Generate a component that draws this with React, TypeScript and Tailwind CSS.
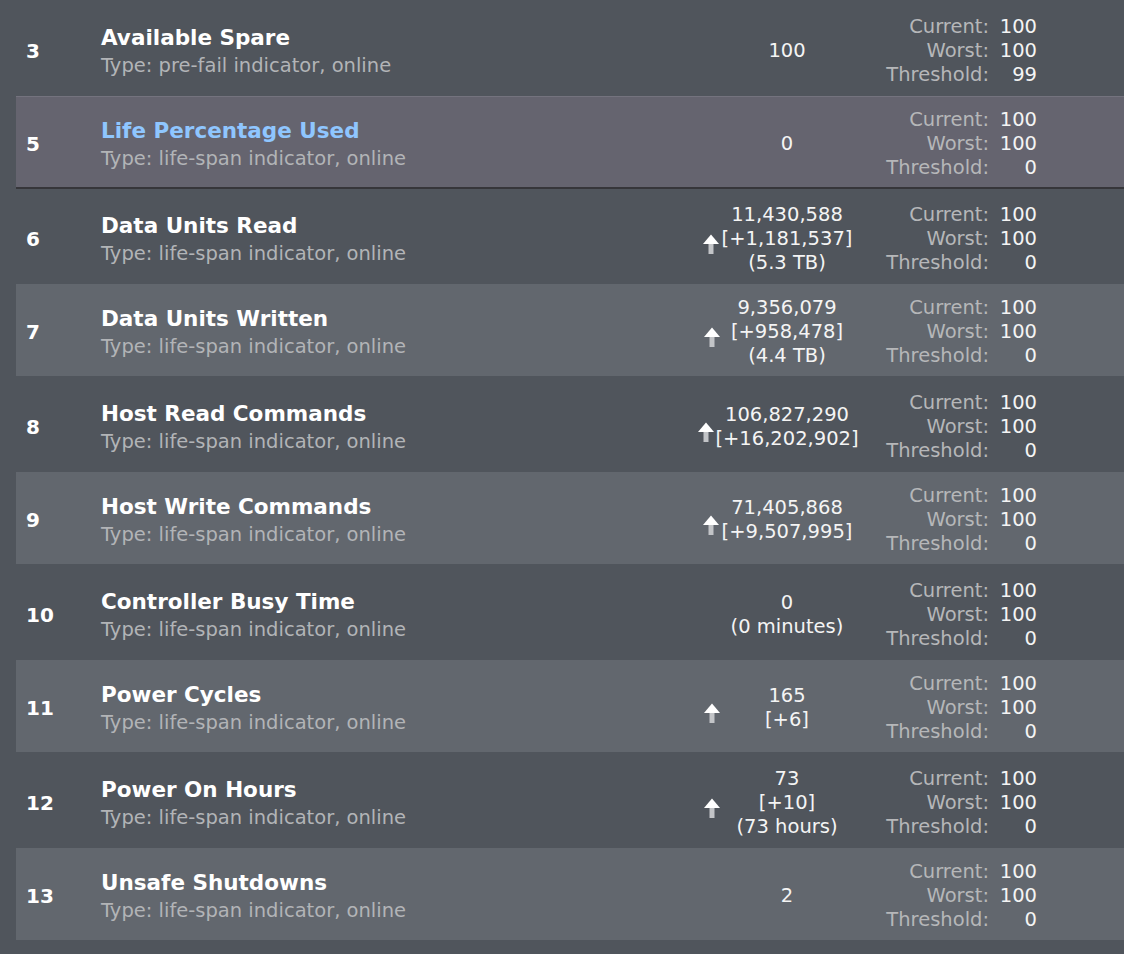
import React from "react";

type Row = {
  id: string;
  title: string;
  type: string;
  values: string[];
  arrow?: string;
  variant: "dark" | "light" | "selected";
  cur: string;
  worst: string;
  thr: string;
};

const rows: Row[] = [
  { id: "3", title: "Available Spare", type: "pre-fail indicator, online", values: ["100"], variant: "dark", cur: "100", worst: "100", thr: "99" },
  { id: "5", title: "Life Percentage Used", type: "life-span indicator, online", values: ["0"], variant: "selected", cur: "100", worst: "100", thr: "0" },
  { id: "6", title: "Data Units Read", type: "life-span indicator, online", values: ["11,430,588", "[+1,181,537]", "(5.3 TB)"], arrow: "left-[6px]", variant: "dark", cur: "100", worst: "100", thr: "0" },
  { id: "7", title: "Data Units Written", type: "life-span indicator, online", values: ["9,356,079", "[+958,478]", "(4.4 TB)"], arrow: "left-[7px]", variant: "light", cur: "100", worst: "100", thr: "0" },
  { id: "8", title: "Host Read Commands", type: "life-span indicator, online", values: ["106,827,290", "[+16,202,902]"], arrow: "left-[1px]", variant: "dark", cur: "100", worst: "100", thr: "0" },
  { id: "9", title: "Host Write Commands", type: "life-span indicator, online", values: ["71,405,868", "[+9,507,995]"], arrow: "left-[6px]", variant: "light", cur: "100", worst: "100", thr: "0" },
  { id: "10", title: "Controller Busy Time", type: "life-span indicator, online", values: ["0", "(0 minutes)"], variant: "dark", cur: "100", worst: "100", thr: "0" },
  { id: "11", title: "Power Cycles", type: "life-span indicator, online", values: ["165", "[+6]"], arrow: "left-[7px]", variant: "light", cur: "100", worst: "100", thr: "0" },
  { id: "12", title: "Power On Hours", type: "life-span indicator, online", values: ["73", "[+10]", "(73 hours)"], arrow: "left-[7px]", variant: "dark", cur: "100", worst: "100", thr: "0" },
  { id: "13", title: "Unsafe Shutdowns", type: "life-span indicator, online", values: ["2"], variant: "light", cur: "100", worst: "100", thr: "0" },
];

function UpArrow() {
  return (
    <svg width="16" height="20" viewBox="0 0 16 20">
      <rect x="5.5" y="9" width="5" height="11" fill="#c2c4c7" />
      <polygon points="8,0.5 16,10 0,10" fill="#ffffff" />
    </svg>
  );
}

function RowView({ r }: { r: Row }) {
  const variantCls =
    r.variant === "dark"
      ? "h-[94px]"
      : r.variant === "light"
      ? "h-[92px] mb-[2px] bg-[#62676e]"
      : "h-[93px] mb-[1px] bg-[#65646f] border-t border-[#74737e] border-b-2 border-b-[#36363a]";
  return (
    <div className={`ml-[16px] pt-[4px] flex items-center ${variantCls}`}>
      <div className="w-[85px] pl-[10px] text-[20px] font-bold text-white leading-none">{r.id}</div>
      <div className="flex-1 flex flex-col -mt-[2px]">
        <div
          className={`text-[21.5px] font-bold leading-[32px] ${
            r.variant === "selected" ? "text-[#8fc6ff]" : "text-white"
          }`}
        >
          {r.title}
        </div>
        <div className="text-[19.5px] leading-[24px] text-[#b2b4b7]">Type: {r.type}</div>
      </div>
      <div className="relative w-[180px] h-full flex flex-col items-center justify-center text-[19.5px] leading-[24px] text-[#f4f4f4]">
        {r.values.map((v, i) => (
          <div key={i} className="whitespace-nowrap">
            {v}
          </div>
        ))}
        {r.arrow && (
          <div className={`absolute top-[calc(50%-5px)] ${r.arrow}`}>
            <UpArrow />
          </div>
        )}
      </div>
      <div className="grid grid-cols-[112px_48px] text-[19.5px] leading-[24px] mr-[87px]">
        <div className="text-right text-[#b6b7b9]">Current:</div>
        <div className="text-right text-[#f4f4f4]">{r.cur}</div>
        <div className="text-right text-[#b6b7b9]">Worst:</div>
        <div className="text-right text-[#f4f4f4]">{r.worst}</div>
        <div className="text-right text-[#b6b7b9]">Threshold:</div>
        <div className="text-right text-[#f4f4f4]">{r.thr}</div>
      </div>
    </div>
  );
}

export default function App() {
  return (
    <div
      className="w-[1124px] h-[954px] overflow-hidden bg-[#50555c] pt-[2px]"
      style={{ fontFamily: '"DejaVu Sans", "Liberation Sans", sans-serif' }}
    >
      {rows.map((r) => (
        <RowView key={r.id} r={r} />
      ))}
    </div>
  );
}
